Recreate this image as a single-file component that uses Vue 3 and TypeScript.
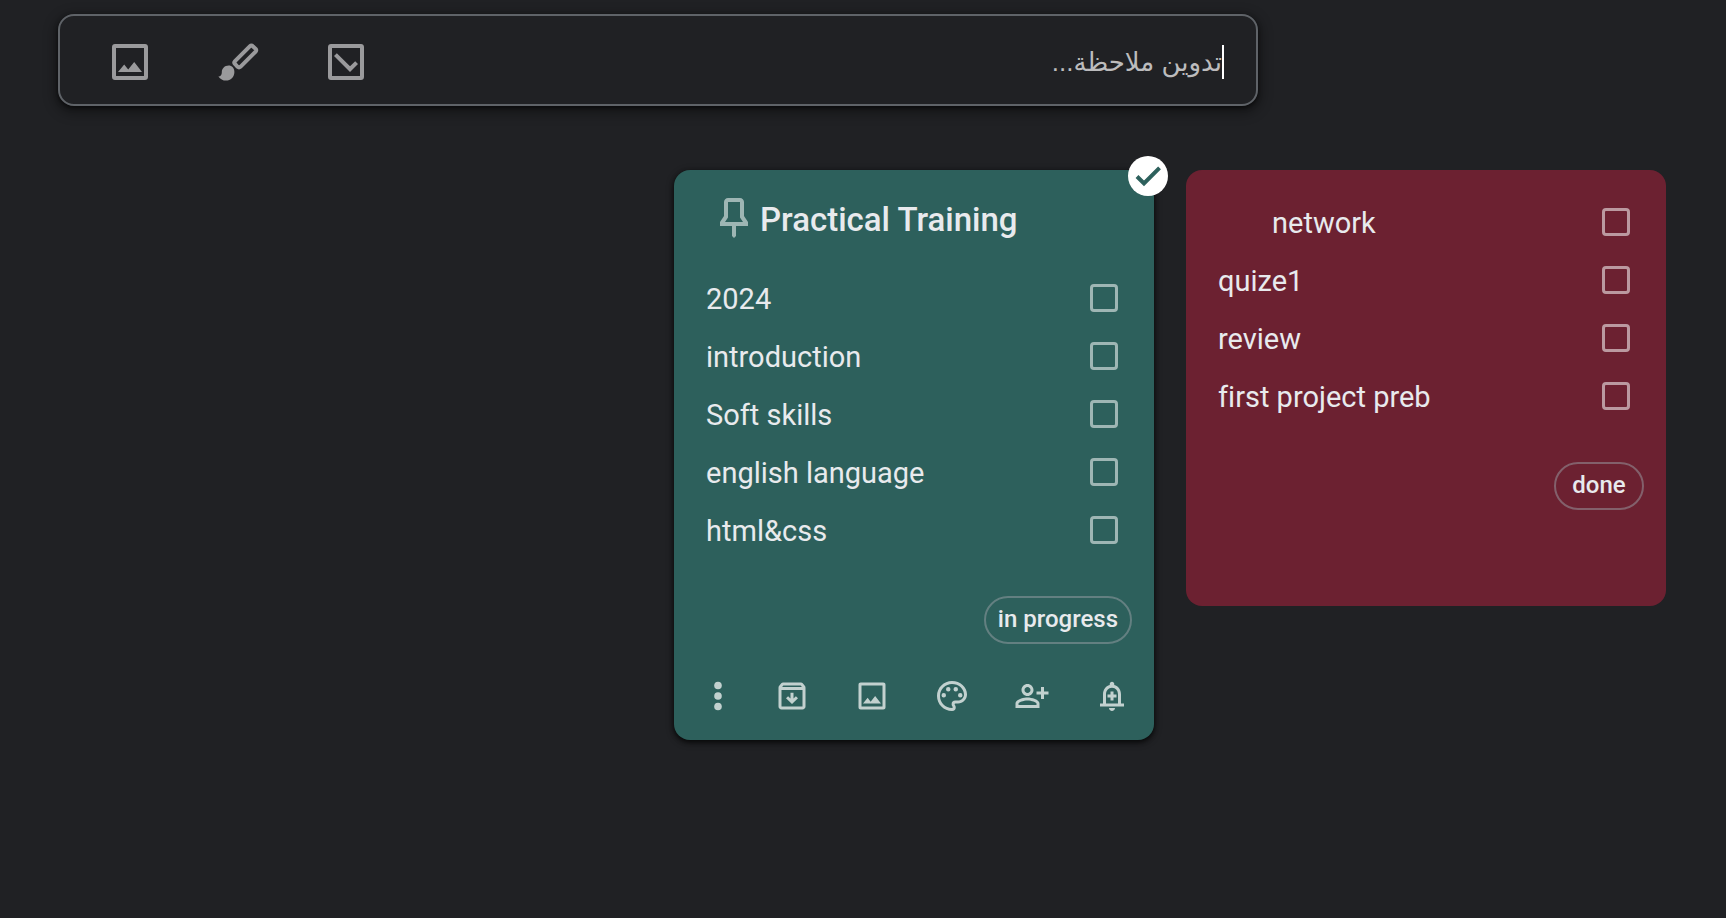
<script setup lang="ts">
import { ref } from 'vue'

interface Item {
  text: string
  nested?: boolean
  done: boolean
}

interface Note {
  id: string
  title?: string
  color: 'teal' | 'wine'
  selected: boolean
  items: Item[]
  label: string
}

const draft = ref('')

const notes = ref<Note[]>([
  {
    id: 'training',
    title: 'Practical Training',
    color: 'teal',
    selected: true,
    items: [
      { text: '2024', done: false },
      { text: 'introduction', done: false },
      { text: 'Soft skills', done: false },
      { text: 'english language', done: false },
      { text: 'html&css', done: false },
    ],
    label: 'in progress',
  },
  {
    id: 'network',
    color: 'wine',
    selected: false,
    items: [
      { text: 'network', nested: true, done: false },
      { text: 'quize1', done: false },
      { text: 'review', done: false },
      { text: 'first project preb', done: false },
    ],
    label: 'done',
  },
])

const imagePath =
  'M19.5 3h-15C3.6 3 3 3.6 3 4.5v15c0 .9.6 1.5 1.5 1.5h15c.9 0 1.5-.6 1.5-1.5v-15c0-.9-.6-1.5-1.5-1.5zM19 19H5V5h14v14zM6 17h12l-3.9-5-3 3.8L9.1 13.2z'

const actions = [
  {
    name: 'Archive',
    path: 'M20.54 5.23l-1.39-1.68C18.88 3.21 18.47 3 18 3H6c-.47 0-.88.21-1.16.55L3.46 5.23C3.17 5.57 3 6.02 3 6.5V19c0 1.1.9 2 2 2h14c1.1 0 2-.9 2-2V6.5c0-.48-.17-.93-.46-1.27zM6.24 5h11.52l.83 1H5.42l.82-1zM5 19V8h14v11H5zM13 9.8h-2v3.9l-1.6-1.6L8 13.5l4 3.9 4-3.9-1.4-1.4-1.6 1.6z',
  },
  { name: 'Add image', path: imagePath },
  {
    name: 'Background options',
    path: 'M12 22C6.49 22 2 17.51 2 12S6.49 2 12 2s10 4.04 10 9c0 3.31-2.69 6-6 6h-1.77c-.28 0-.5.22-.5.5 0 .12.05.23.13.33.41.47.64 1.06.64 1.67A2.5 2.5 0 0 1 12 22zm0-18c-4.41 0-8 3.59-8 8s3.59 8 8 8c.28 0 .5-.22.5-.5a.54.54 0 0 0-.14-.35c-.41-.46-.63-1.05-.63-1.65a2.5 2.5 0 0 1 2.5-2.5H16c2.21 0 4-1.79 4-4 0-3.86-3.59-7-8-7zM5 11.5a1.5 1.5 0 1 0 3 0 1.5 1.5 0 1 0-3 0M8 7.5a1.5 1.5 0 1 0 3 0 1.5 1.5 0 1 0-3 0M13 7.5a1.5 1.5 0 1 0 3 0 1.5 1.5 0 1 0-3 0M16 11.5a1.5 1.5 0 1 0 3 0 1.5 1.5 0 1 0-3 0',
  },
  {
    name: 'Collaborator',
    path: 'M9 12c2.21 0 4-1.79 4-4s-1.79-4-4-4-4 1.79-4 4 1.79 4 4 4zm0-6c1.1 0 2 .9 2 2s-.9 2-2 2-2-.9-2-2 .9-2 2-2zm0 7c-2.67 0-8 1.34-8 4v3h16v-3c0-2.66-5.33-4-8-4zm6 5H3v-.99C3.2 16.29 6.3 15 9 15s5.8 1.29 6 2v1zM20 9V6h-2v3h-3v2h3v3h2v-3h3V9z',
  },
  {
    name: 'Remind me',
    path: 'M18 17v-6c0-3.07-1.63-5.64-4.5-6.32V4c0-.83-.67-1.5-1.5-1.5s-1.5.67-1.5 1.5v.68C7.64 5.36 6 7.92 6 11v6H4v2h16v-2zm-2 0H8v-6c0-2.48 1.51-4.5 4-4.5s4 2.02 4 4.5zM12 22c1.1 0 2-.9 2-2h-4c0 1.1.9 2 2 2zM13 9h-2v2H9v2h2v2h2v-2h2v-2h-2z',
  },
]
</script>

<template>
  <main class="page">
    <form class="composer" @submit.prevent>
      <div class="composer-tools">
        <button type="button" aria-label="New note with image">
          <svg viewBox="0 0 24 24" fill-rule="evenodd"><path :d="imagePath" /></svg>
        </button>
        <button type="button" aria-label="New note with drawing">
          <svg viewBox="0 0 24 24">
            <path
              d="M2.2 19.2c1.2-.1 1.7-.8 1.7-2 0-2 1.5-3.4 3.4-3.4 1.7 0 2.9 1.3 2.9 3.2 0 2.5-1.9 4.3-4.2 4.3-1.5 0-2.9-.8-3.8-2.1z"
            />
            <path
              class="outline"
              d="M18 4.1l-7.5 7.5q-.7.7 0 1.4l1.3 1.4q.7.6 1.4 0l7.6-7.6q.6-.7 0-1.4l-1.4-1.3q-.7-.7-1.4 0z"
            />
          </svg>
        </button>
        <button type="button" aria-label="New list">
          <svg viewBox="0 0 24 24" fill-rule="evenodd">
            <path
              d="M19.5 3h-15C3.6 3 3 3.6 3 4.5v15c0 .9.6 1.5 1.5 1.5h15c.9 0 1.5-.6 1.5-1.5v-15c0-.9-.6-1.5-1.5-1.5zM19 19H5V5h14v14zM6 9l1.42-1.42 6.59 6.59 2.58-2.57L18 13l-4 4z"
            />
          </svg>
        </button>
      </div>
      <div class="composer-field" dir="rtl">
        <span class="caret" aria-hidden="true"></span>
        <input v-model="draft" type="text" placeholder="تدوين ملاحظة..." aria-label="تدوين ملاحظة" />
      </div>
    </form>

    <section class="notes">
      <article v-for="note in notes" :key="note.id" class="note" :class="[note.color, { selected: note.selected }]">
        <button
          v-if="note.selected"
          type="button"
          class="badge"
          aria-label="Deselect note"
          @click="note.selected = false"
        >
          <svg viewBox="0 0 24 24"><path d="M9 16.17L4.83 12l-1.42 1.41L9 19 21 7l-1.41-1.41z" /></svg>
        </button>

        <header v-if="note.title" class="note-head">
          <button type="button" class="pin" aria-label="Pin note">
            <svg viewBox="0 0 24 24">
              <path
                d="M17 4v7l2 3v2h-6v5l-1 1-1-1v-5H5v-2l2-3V4c0-1.1.9-2 2-2h6c1.11 0 2 .89 2 2zM9 4v7.75L7.5 14h9L15 11.75V4H9z"
              />
            </svg>
          </button>
          <h2>{{ note.title }}</h2>
        </header>

        <ul class="items">
          <li v-for="item in note.items" :key="item.text">
            <label :class="{ nested: item.nested }">
              <span>{{ item.text }}</span>
              <input v-model="item.done" type="checkbox" />
            </label>
          </li>
        </ul>

        <div class="labels">
          <button type="button" class="chip">{{ note.label }}</button>
        </div>

        <footer class="toolbar">
          <template v-if="note.selected">
            <button type="button" class="more" aria-label="More">
              <svg viewBox="0 0 24 36">
                <circle cx="12" cy="7.5" r="3.8" />
                <circle cx="12" cy="18" r="3.8" />
                <circle cx="12" cy="28.5" r="3.8" />
              </svg>
            </button>
            <button v-for="action in actions" :key="action.name" type="button" :aria-label="action.name">
              <svg viewBox="0 0 24 24" fill-rule="evenodd"><path :d="action.path" /></svg>
            </button>
          </template>
        </footer>
      </article>
    </section>
  </main>
</template>

<style>
body {
  margin: 0;
  background: #202124;
}
</style>

<style scoped>
.page {
  box-sizing: border-box;
  min-height: 100vh;
  padding: 14px 60px 32px 58px;
  color: #e8eaed;
  font-family: Roboto, 'Noto Sans', sans-serif;
}

button {
  display: block;
  padding: 0;
  border: 0;
  background: none;
  color: inherit;
  font: inherit;
  cursor: pointer;
}

svg {
  display: block;
  width: 100%;
  height: 100%;
  fill: currentColor;
}

.composer {
  display: flex;
  align-items: center;
  justify-content: space-between;
  box-sizing: border-box;
  max-width: 1200px;
  height: 92px;
  padding: 4px 32px 0 46px;
  border: 2px solid #5f6368;
  border-radius: 16px;
  background: #202124;
  box-shadow: 0 2px 4px rgba(0, 0, 0, 0.6), 0 4px 12px 4px rgba(0, 0, 0, 0.3);
}

.composer-tools {
  display: flex;
  gap: 60px;
  color: #9a9a9c;
}

.composer-tools button {
  width: 48px;
  height: 48px;
}

.outline {
  fill: none;
  stroke: currentColor;
  stroke-width: 2;
}

.composer-field {
  display: flex;
  flex: 1;
  align-items: center;
}

.caret {
  width: 2px;
  height: 34px;
  background: #ffffff;
}

.composer-field input {
  flex: 1;
  min-width: 0;
  padding: 0;
  border: 0;
  outline: 0;
  background: none;
  color: #e8eaed;
  font: 26px 'Liberation Sans', 'DejaVu Sans', sans-serif;
}

.composer-field input::placeholder {
  color: #bcbcbd;
  opacity: 1;
}

.notes {
  display: flex;
  flex-wrap: wrap;
  align-items: flex-start;
  justify-content: flex-end;
  gap: 32px;
  margin-top: 64px;
}

.note {
  position: relative;
  width: 480px;
  border-radius: 16px;
}

.teal {
  background: #2d605c;
  color: #2d605c;
}

.wine {
  padding-top: 23px;
  background: #6c2131;
  color: #6c2131;
}

.selected {
  box-shadow: 0 2px 4px rgba(0, 0, 0, 0.6), 0 2px 6px 2px rgba(0, 0, 0, 0.3);
}

.badge {
  position: absolute;
  top: -14px;
  right: -14px;
  width: 40px;
  height: 40px;
  padding: 4px;
  border-radius: 50%;
  background: #ffffff;
}

.badge path {
  stroke: currentColor;
  stroke-width: 1;
}

.note-head {
  display: flex;
  align-items: center;
  gap: 2px;
  padding: 24px 32px 27px 36px;
}

.pin {
  width: 48px;
  height: 48px;
  color: rgba(255, 255, 255, 0.54);
}

h2 {
  margin: 0;
  padding-top: 4px;
  color: #e8eaed;
  font-size: 33px;
  font-weight: 500;
  line-height: 44px;
}

.items {
  margin: 0;
  padding: 0;
  list-style: none;
}

.items label {
  display: flex;
  align-items: center;
  justify-content: space-between;
  height: 58px;
  padding: 0 36px 0 32px;
  color: #e8eaed;
  font-size: 29px;
  font-variant-ligatures: none;
  line-height: 40px;
}

.items span {
  padding-top: 1px;
}

.items .nested {
  padding-left: 86px;
}

.items input {
  appearance: none;
  box-sizing: border-box;
  width: 28px;
  height: 28px;
  margin: 0;
  border: 3px solid rgba(255, 255, 255, 0.54);
  border-radius: 4px;
}

.items input:checked {
  background: rgba(255, 255, 255, 0.54);
}

.labels {
  display: flex;
  justify-content: flex-end;
  padding: 37px 22px 0;
}

.chip {
  min-width: 90px;
  height: 48px;
  padding: 0 12px 2px;
  border: 2px solid rgba(154, 160, 166, 0.5);
  border-radius: 24px;
  color: #e8eaed;
  font-size: 24px;
  font-weight: 500;
}

.toolbar {
  display: flex;
  align-items: center;
  justify-content: flex-end;
  gap: 44px;
  box-sizing: border-box;
  height: 96px;
  padding: 8px 24px 0;
  color: rgba(255, 255, 255, 0.71);
}

.toolbar button {
  width: 36px;
  height: 36px;
}

.toolbar .more {
  width: 24px;
}
</style>
